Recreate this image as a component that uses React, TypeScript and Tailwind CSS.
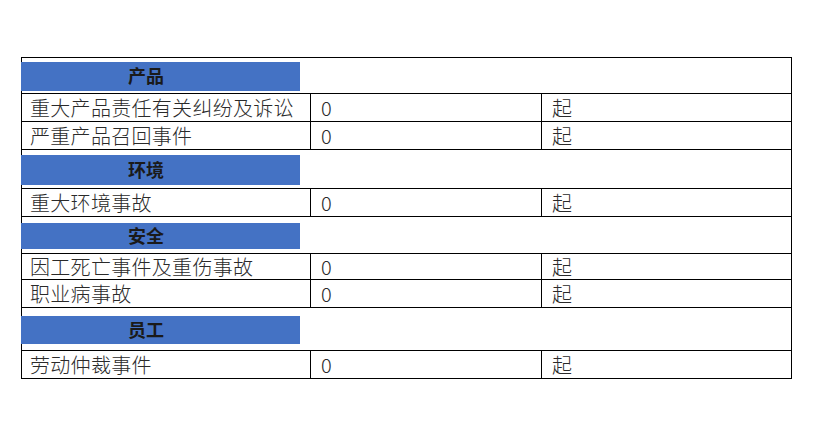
import React from "react";

type Row =
  | { kind: "h"; label: string; pt: number; h: number; ch: number }
  | { kind: "d"; label: string; h: number };

const rows: Row[] = [
  { kind: "h", label: "产品", pt: 4, h: 29, ch: 35 },
  { kind: "d", label: "重大产品责任有关纠纷及诉讼", h: 28 },
  { kind: "d", label: "严重产品召回事件", h: 28 },
  { kind: "h", label: "环境", pt: 5, h: 30, ch: 39 },
  { kind: "d", label: "重大环境事故", h: 28 },
  { kind: "h", label: "安全", pt: 6, h: 26, ch: 37 },
  { kind: "d", label: "因工死亡事件及重伤事故", h: 26 },
  { kind: "d", label: "职业病事故", h: 28 },
  { kind: "h", label: "员工", pt: 8, h: 28, ch: 43 },
  { kind: "d", label: "劳动仲裁事件", h: 28 },
];

export default function App() {
  return (
    <div
      className="w-[815px] h-[441px] bg-white pt-[57px] pl-[21px]"
      style={{ fontFamily: '"Noto Sans CJK SC", "Noto Sans", sans-serif' }}
    >
      <div className="w-[771px] border border-black">
        {rows.map((r, i) =>
          r.kind === "h" ? (
            <div
              key={i}
              className={i > 0 ? "border-t border-black" : ""}
              style={{ height: r.ch, paddingTop: r.pt }}
            >
              <div
                className="-ml-px w-[279px] bg-[#4472c4] flex items-center pl-[107px] text-[18px] font-bold text-[#1a1a1a] leading-none"
                style={{ height: r.h }}
              >
                <span className="-mt-[3px]">{r.label}</span>
              </div>
            </div>
          ) : (
            <div
              key={i}
              className="grid grid-cols-[288px_231px_250px] border-t border-black text-[20px] text-[#2a2a2a] leading-none font-light"
              style={{ height: r.h }}
            >
              <div className="flex items-center pl-[8px] tracking-[0.3px] whitespace-nowrap">
                {r.label}
              </div>
              <div className="flex items-center pl-[10px] border-l border-black">0</div>
              <div className="flex items-center pl-[10px] border-l border-black">起</div>
            </div>
          )
        )}
      </div>
    </div>
  );
}
